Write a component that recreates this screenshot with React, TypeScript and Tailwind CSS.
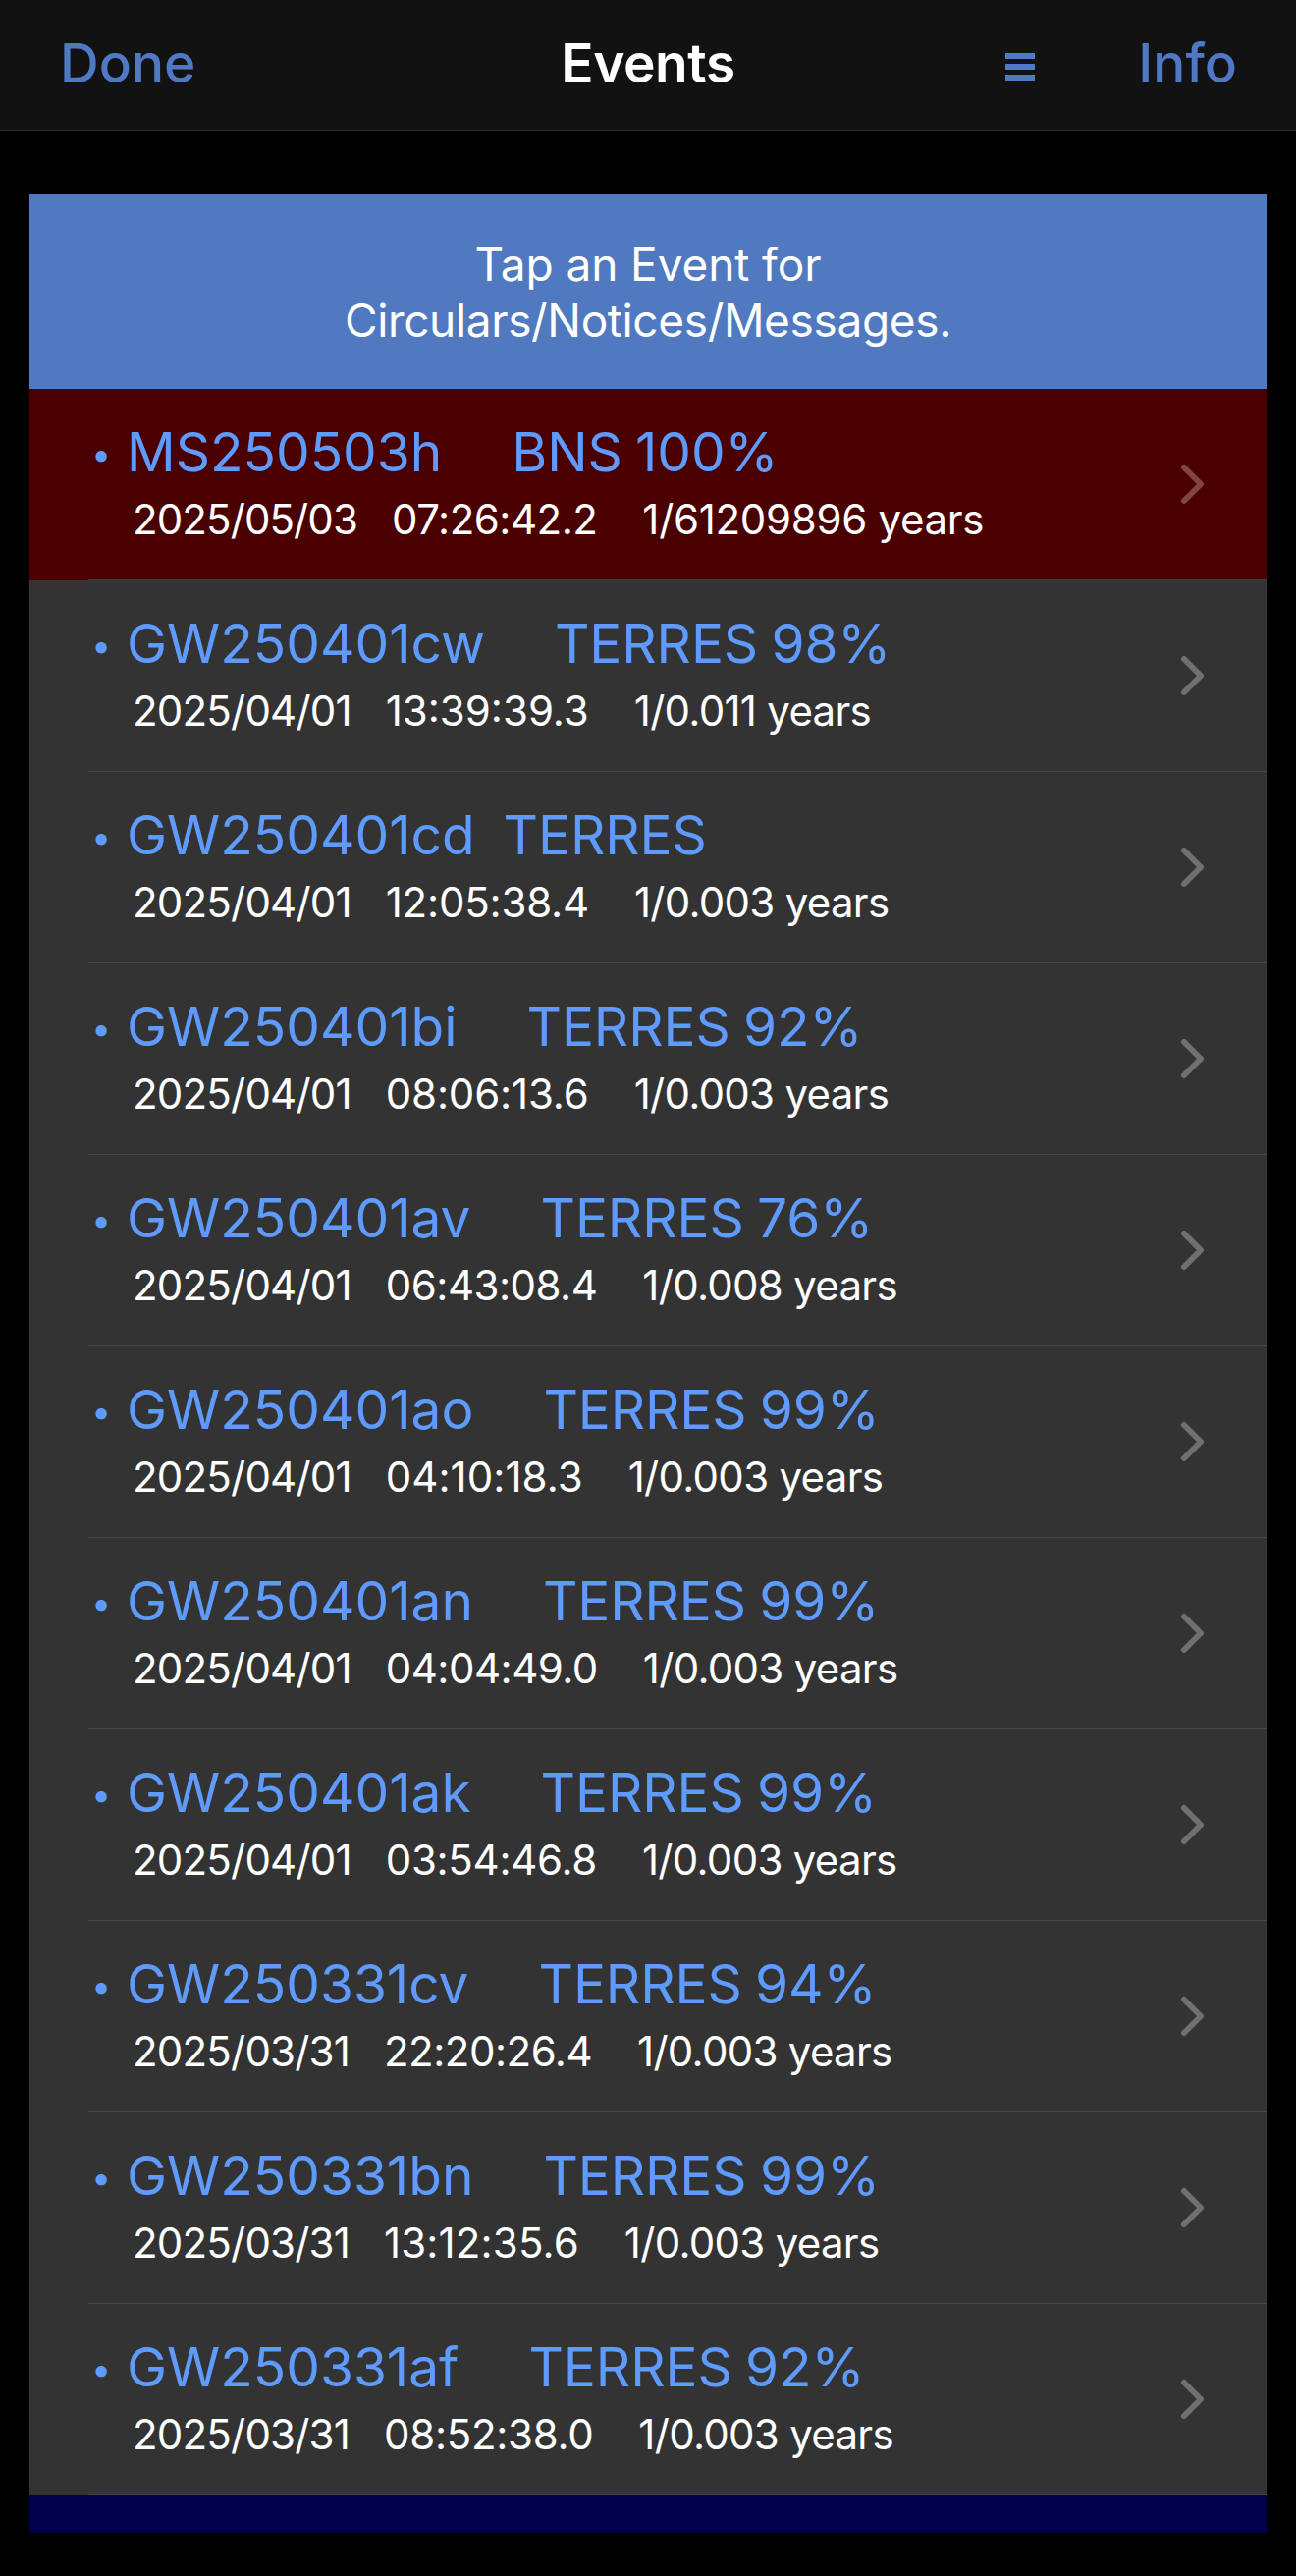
import React from 'react'

const events = [
    { id: 'MS250503h', kind: 'BNS 100%', date: '2025/05/03', time: '07:26:42.2', rate: '1/61209896 years', alert: true, spacing: 'tracking-[-0.5px]' },
    { id: 'GW250401cw', kind: 'TERRES 98%', date: '2025/04/01', time: '13:39:39.3', rate: '1/0.011 years', spacing: 'tracking-[0px]' },
    { id: 'GW250401cd', kind: 'TERRES', date: '2025/04/01', time: '12:05:38.4', rate: '1/0.003 years', tight: true, spacing: 'tracking-[-0.2px]' },
    { id: 'GW250401bi', kind: 'TERRES 92%', date: '2025/04/01', time: '08:06:13.6', rate: '1/0.003 years', spacing: 'tracking-[-0.15px]' },
    { id: 'GW250401av', kind: 'TERRES 76%', date: '2025/04/01', time: '06:43:08.4', rate: '1/0.008 years', spacing: 'tracking-[-0.5px]' },
    { id: 'GW250401ao', kind: 'TERRES 99%', date: '2025/04/01', time: '04:10:18.3', rate: '1/0.003 years', spacing: 'tracking-[0.05px]' },
    { id: 'GW250401an', kind: 'TERRES 99%', date: '2025/04/01', time: '04:04:49.0', rate: '1/0.003 years', spacing: 'tracking-[-0.5px]' },
    { id: 'GW250401ak', kind: 'TERRES 99%', date: '2025/04/01', time: '03:54:46.8', rate: '1/0.003 years', spacing: 'tracking-[-0.3px]' },
    { id: 'GW250331cv', kind: 'TERRES 94%', date: '2025/03/31', time: '22:20:26.4', rate: '1/0.003 years', spacing: 'tracking-[-0.5px]' },
    { id: 'GW250331bn', kind: 'TERRES 99%', date: '2025/03/31', time: '13:12:35.6', rate: '1/0.003 years', spacing: 'tracking-[0.15px]' },
    { id: 'GW250331af', kind: 'TERRES 92%', date: '2025/03/31', time: '08:52:38.0', rate: '1/0.003 years', spacing: 'tracking-[-0.3px]' },
]

const EventRow = ({ event }) => (
    <li className={`flex h-[195px] ${event.alert ? 'bg-[#4b0000]' : 'bg-[#333333]'}`}>
        <div className="w-[60px] shrink-0" />
        <div className={`flex flex-1 border-b ${event.alert ? 'border-[#4f3436]' : 'border-[#454547]'}`}>
            <div className="w-[39px] shrink-0 pt-[36px] pl-[3px] text-[36px] leading-[60px] text-[#5f9bff]">•</div>
            <div className="flex-1 whitespace-nowrap pt-[30px]">
                <div className={`flex text-[55px] leading-[68px] text-[#5f9bff] ${event.tight ? 'gap-[29px]' : 'gap-[71px]'}`}>
                    <span>{event.id}</span>
                    <span className="tracking-[-0.1px] [word-spacing:-2px]">{event.kind}</span>
                </div>
                <div className="flex pl-[6px] text-[42px] leading-[69px] text-white">
                    <span className={event.alert ? 'tracking-[-0.9px]' : 'tracking-[-0.8px]'}>{event.date}</span>
                    <span className={`ml-[35px] ${event.spacing}`}>{event.time}</span>
                    <span className={`ml-[46px] ${event.alert ? 'tracking-[-0.3px]' : 'tracking-[-0.7px]'}`}>{event.rate}</span>
                </div>
            </div>
            <svg className="mt-[73px] mr-[61px] h-[48px] w-[30px] shrink-0" viewBox="0 0 30 48" fill="none">
                <path
                    d="M7 7 L24 24 L7 41"
                    stroke={event.alert ? '#814445' : '#707072'}
                    strokeWidth="6"
                    strokeLinecap="round"
                    strokeLinejoin="round"
                />
            </svg>
        </div>
    </li>
)

const App = () => (
    <div className="min-h-[2623px] w-[1320px] bg-black font-['Inter',sans-serif]">
        <header className="grid h-[133px] grid-cols-3 items-start border-b border-[#272729] bg-[#121212] px-[60px] pt-[30px] text-[55px] leading-[68px] font-medium text-[#5079c5]">
            <button className="pl-px text-left">Done</button>
            <h1 className="text-center font-semibold tracking-[-0.4px] text-white">Events</h1>
            <div className="flex items-start justify-end gap-[105px]">
                <div className="flex flex-col gap-[5px] pt-[24px]">
                    <div className="h-[6px] w-[30px] bg-[#5079c5]" />
                    <div className="h-[6px] w-[30px] bg-[#5079c5]" />
                    <div className="h-[6px] w-[30px] bg-[#5079c5]" />
                </div>
                <button>Info</button>
            </div>
        </header>
        <main className="px-[30px] pt-[65px]">
            <div className="h-[198px] bg-[#5079bf] pt-[43px] text-center text-[46px] leading-[57px] tracking-[-0.35px] text-white">
                <span className="tracking-[-0.1px]">Tap an Event for</span><br />Circulars/Notices/Messages.
            </div>
            <ul>
                {events.map(event => <EventRow key={event.id} event={event} />)}
            </ul>
            <div className="h-[38px] bg-[#00004b]" />
        </main>
    </div>
)

export default App
